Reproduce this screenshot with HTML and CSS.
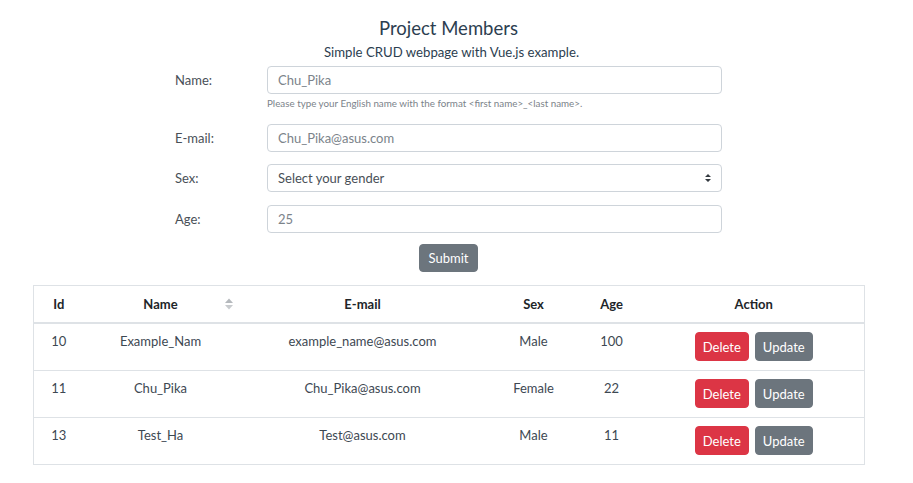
FILE: index.html
```html
<!DOCTYPE html>
<html lang="en">
<head>
<meta charset="utf-8">
<title>Project Members</title>
<link rel="stylesheet" href="styles.css">
</head>
<body>
<div class="app">
  <h1 class="title">Project Members</h1>
  <p class="subtitle">Simple CRUD webpage with Vue.js example.</p>

  <form class="form">
    <div class="row row-name">
      <label class="label">Name:</label>
      <div class="field">
        <input class="input" type="text" value="Chu_Pika">
        <small class="help">Please type your English name with the format &lt;first name&gt;_&lt;last name&gt;.</small>
      </div>
    </div>
    <div class="row">
      <label class="label">E-mail:</label>
      <div class="field"><input class="input" type="text" value="Chu_Pika@asus.com"></div>
    </div>
    <div class="row row-sex">
      <label class="label">Sex:</label>
      <div class="field select-wrap">
        <select class="input select"><option>Select your gender</option></select>
        <svg class="select-arrow" width="8" height="10" viewBox="0 0 8 10"><path d="M4 1 L7 4 H1 Z M4 9 L1 6 H7 Z" fill="#343a40"/></svg>
      </div>
    </div>
    <div class="row">
      <label class="label">Age:</label>
      <div class="field"><input class="input" type="text" value="25"></div>
    </div>
    <div class="submit-row"><button type="button" class="btn btn-gray">Submit</button></div>
  </form>

  <table class="table">
    <colgroup>
      <col style="width:50px"><col style="width:154px"><col style="width:250px"><col style="width:92px"><col style="width:64px"><col style="width:221px">
    </colgroup>
    <thead>
      <tr>
        <th>Id</th>
        <th class="sortable">Name
          <svg class="sort-icon" width="10" height="12" viewBox="0 0 10 12"><path d="M5 0.5 L9 5 H1 Z" fill="#b5b9bd"/><path d="M5 11.5 L1 7 H9 Z" fill="#c8cbce"/></svg>
        </th>
        <th>E-mail</th>
        <th>Sex</th>
        <th>Age</th>
        <th>Action</th>
      </tr>
    </thead>
    <tbody>
      <tr>
        <td>10</td><td>Example_Nam</td><td>example_name@asus.com</td><td>Male</td><td>100</td>
        <td><div class="actions"><button class="btn btn-red">Delete</button><button class="btn btn-gray">Update</button></div></td>
      </tr>
      <tr>
        <td>11</td><td>Chu_Pika</td><td>Chu_Pika@asus.com</td><td>Female</td><td>22</td>
        <td><div class="actions"><button class="btn btn-red">Delete</button><button class="btn btn-gray">Update</button></div></td>
      </tr>
      <tr>
        <td>13</td><td>Test_Ha</td><td>Test@asus.com</td><td>Male</td><td>11</td>
        <td><div class="actions"><button class="btn btn-red">Delete</button><button class="btn btn-gray">Update</button></div></td>
      </tr>
    </tbody>
  </table>
</div>
</body>
</html>
```

FILE: styles.css
```css
* { box-sizing: border-box; }
body {
  margin: 0;
  background: #fff;
  font-family: Lato, "Noto Sans", sans-serif;
  color: #2c3e50;
}
.app {
  width: 897px;
  padding-top: 16px;
  text-align: center;
}
.title {
  margin: 0;
  font-size: 18.5px;
  line-height: 24px;
  font-weight: 400;
}
.subtitle {
  margin: 3px 0 0 6px;
  font-size: 13.2px;
  line-height: 18px;
}
.form {
  width: 547px;
  margin: 5px auto 0;
  text-align: left;
}
.row {
  display: grid;
  grid-template-columns: 92px 455px;
  align-items: start;
  margin-bottom: 12px;
}
.row-name { margin-bottom: 15px; }
.row-sex { margin-bottom: 13px; }
.label {
  font-size: 13px;
  line-height: 28px;
  color: #495057;
}
.field { display: flex; flex-direction: column; }
.input {
  width: 100%;
  height: 28px;
  border: 1px solid #ced4da;
  border-radius: 4px;
  padding: 0 10px;
  font-family: inherit;
  font-size: 13px;
  color: #7b838a;
  background: #fff;
  outline: none;
}
.help {
  margin-top: 3px;
  font-size: 9.8px;
  line-height: 12px;
  color: #7b838a;
}
.select-wrap { position: relative; }
.select {
  appearance: none;
  -webkit-appearance: none;
  color: #495057;
}
.select-arrow {
  position: absolute;
  right: 10px;
  top: 9px;
}
.submit-row {
  display: flex;
  justify-content: center;
  margin-top: -1px;
}
.btn {
  height: 29px;
  border: 1px solid transparent;
  border-radius: 4px;
  padding: 0 7px;
  font-family: inherit;
  font-size: 13px;
  font-weight: 400;
  color: #fff;
  cursor: pointer;
}
.btn-gray { background: #6c757d; border-color: #6c757d; }
.btn-red { background: #dc3545; border-color: #dc3545; }
.submit-row .btn { height: 28px; padding: 0 9px; }

.table {
  margin: 13px 0 0 33px;
  width: 831px;
  table-layout: fixed;
  border-collapse: collapse;
  border: 1px solid #dee2e6;
  font-size: 13px;
}
.table th {
  padding: 9px 4px;
  line-height: 18px;
  font-weight: 700;
  color: #212529;
  border-bottom: 2px solid #dee2e6;
  text-align: center;
}
.sortable { position: relative; }
.sort-icon {
  position: absolute;
  right: 4px;
  top: 12px;
}
.table td {
  padding: 7px 4px 9px;
  line-height: 20px;
  vertical-align: top;
  text-align: center;
  color: #3d4852;
  border-top: 1px solid #dee2e6;
}
.actions {
  display: flex;
  justify-content: center;
  gap: 6px;
  margin-top: 1px;
  height: 29px;
}
```
